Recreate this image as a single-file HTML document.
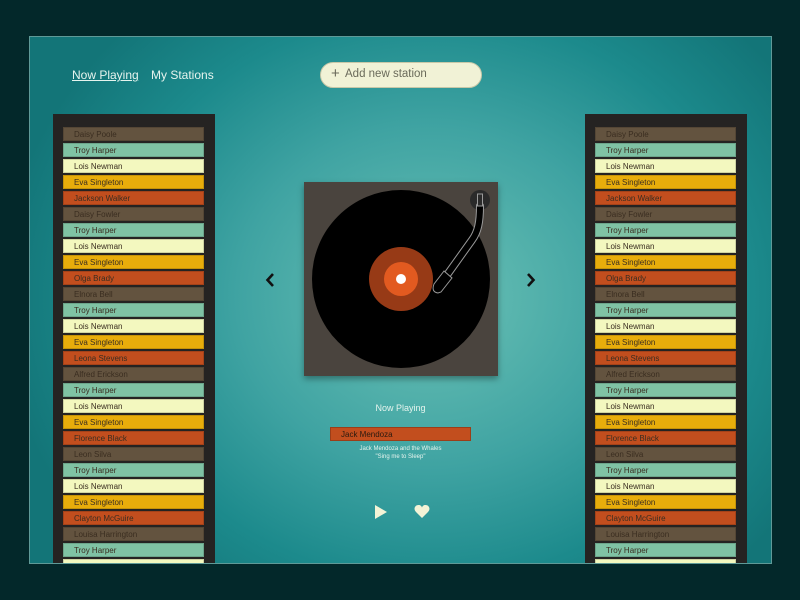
<!DOCTYPE html>
<html><head><style>
*{margin:0;padding:0;box-sizing:border-box}
body{width:800px;height:600px;background:#03282a;position:relative;overflow:hidden;font-family:"Liberation Sans",sans-serif}
.frame{position:absolute;left:29px;top:36px;width:743px;height:528px;border:1px solid #5f9a98;background:radial-gradient(ellipse 430px 380px at 400px 260px,#6cc2b6 0%,#3fa3a2 45%,#1c8a8c 75%,#137578 100%);overflow:hidden}
.nav{position:absolute;top:31px;font-size:12px;color:#e6f4ee}
.search{position:absolute;left:290px;top:25px;width:162px;height:26px;border-radius:13px;background:#f1f2d6;border:1px solid #c8c8a8;font-size:11.5px;color:#6a6a5a;padding:5px 0 0 24px}
.search b{position:absolute;left:10px;top:2px;font-weight:normal;font-size:15px}
.panel{position:absolute;top:77px;width:162px;height:460px;background:#252322}
.item{position:absolute;left:10px;width:141px;height:14px;font-size:8px;color:#3a2d20;padding:2px 0 0 10px;border:1px solid rgba(0,0,0,.15)}
.c0{background:#63533f}.c1{background:#7fc2a4}.c2{background:#f3f8bf}.c3{background:#e8ad0b}.c4{background:#c24e1e}
.tt{position:absolute;left:274px;top:145px;width:194px;height:194px;background:#4a443e;box-shadow:0 3px 6px rgba(0,0,0,.35)}
.cap{position:absolute;width:100%;text-align:center;color:#e6f4ee}
</style></head><body>
<div class="frame">
<div class="nav" style="left:42px;text-decoration:underline">Now Playing</div>
<div class="nav" style="left:121px">My Stations</div>
<div class="search"><b>+</b>Add new station</div>
<div class="panel" style="left:23px" id="L"></div>
<div class="panel" style="left:555px" id="R"></div>
<div class="tt">
<svg width="194" height="194">
<circle cx="97" cy="97" r="89" fill="#000"/>
<circle cx="97" cy="97" r="32" fill="#973a16"/>
<circle cx="97" cy="97" r="17" fill="#e25a20"/>
<circle cx="97" cy="97" r="5" fill="#fff"/>
<circle cx="176" cy="18" r="10" fill="#2a2a2a"/>
<path d="M176 24 C176 40,174 50,168 58 L143 93" stroke="#9a9a9a" stroke-width="8" fill="none" stroke-linecap="round"/>
<path d="M176 24 C176 40,174 50,168 58 L143 93" stroke="#000" stroke-width="6" fill="none" stroke-linecap="round"/>
<path d="M140 89 L130 102 Q127 110 134 111 L137 110 L148 96 Z" fill="#000" stroke="#9a9a9a" stroke-width="1"/>
<rect x="173.5" y="12" width="5" height="12" fill="#2a2a2a" stroke="#9a9a9a" stroke-width="1"/>
</svg></div>
<svg style="position:absolute;left:234px;top:235px" width="14" height="16"><path d="M9 2 L3.5 8 L9 14" stroke="#111" stroke-width="2.6" fill="none"/></svg>
<svg style="position:absolute;left:494px;top:235px" width="14" height="16"><path d="M4 2 L9.5 8 L4 14" stroke="#111" stroke-width="2.6" fill="none"/></svg>
<div class="cap" style="top:366px;font-size:9px">Now Playing</div>
<div style="position:absolute;left:300px;top:390px;width:141px;height:14px;background:#c24e1e;border:1px solid rgba(0,0,0,.2);font-size:8px;color:#2a1a10;padding:2px 0 0 10px">Jack Mendoza</div>
<div class="cap" style="top:408px;font-size:6px;line-height:8px">Jack Mendoza and the Whales<br>"Sing me to Sleep"</div>
<svg style="position:absolute;left:344px;top:467px" width="14" height="16"><path d="M1 1 L13 8 L1 15Z" fill="#f3f3d6"/></svg>
<svg style="position:absolute;left:384px;top:467px" width="16" height="15"><path d="M8 14 L2 8 C-1 5,1 1,4.5 1 C6.5 1,7.5 2,8 3.5 C8.5 2,9.5 1,11.5 1 C15 1,17 5,14 8Z" fill="#f3f3d6"/></svg>
</div>
<script>
var n=["Daisy Poole","Troy Harper","Lois Newman","Eva Singleton","Jackson Walker","Daisy Fowler","Troy Harper","Lois Newman","Eva Singleton","Olga Brady","Elnora Bell","Troy Harper","Lois Newman","Eva Singleton","Leona Stevens","Alfred Erickson","Troy Harper","Lois Newman","Eva Singleton","Florence Black","Leon Silva","Troy Harper","Lois Newman","Eva Singleton","Clayton McGuire","Louisa Harrington","Troy Harper",""];
["L","R"].forEach(function(id){var p=document.getElementById(id),h="";n.forEach(function(t,i){h+='<div class="item c'+(i%5)+'" style="top:'+(13+i*16)+'px">'+t+'</div>'});p.innerHTML=h});
</script>
</body></html>
